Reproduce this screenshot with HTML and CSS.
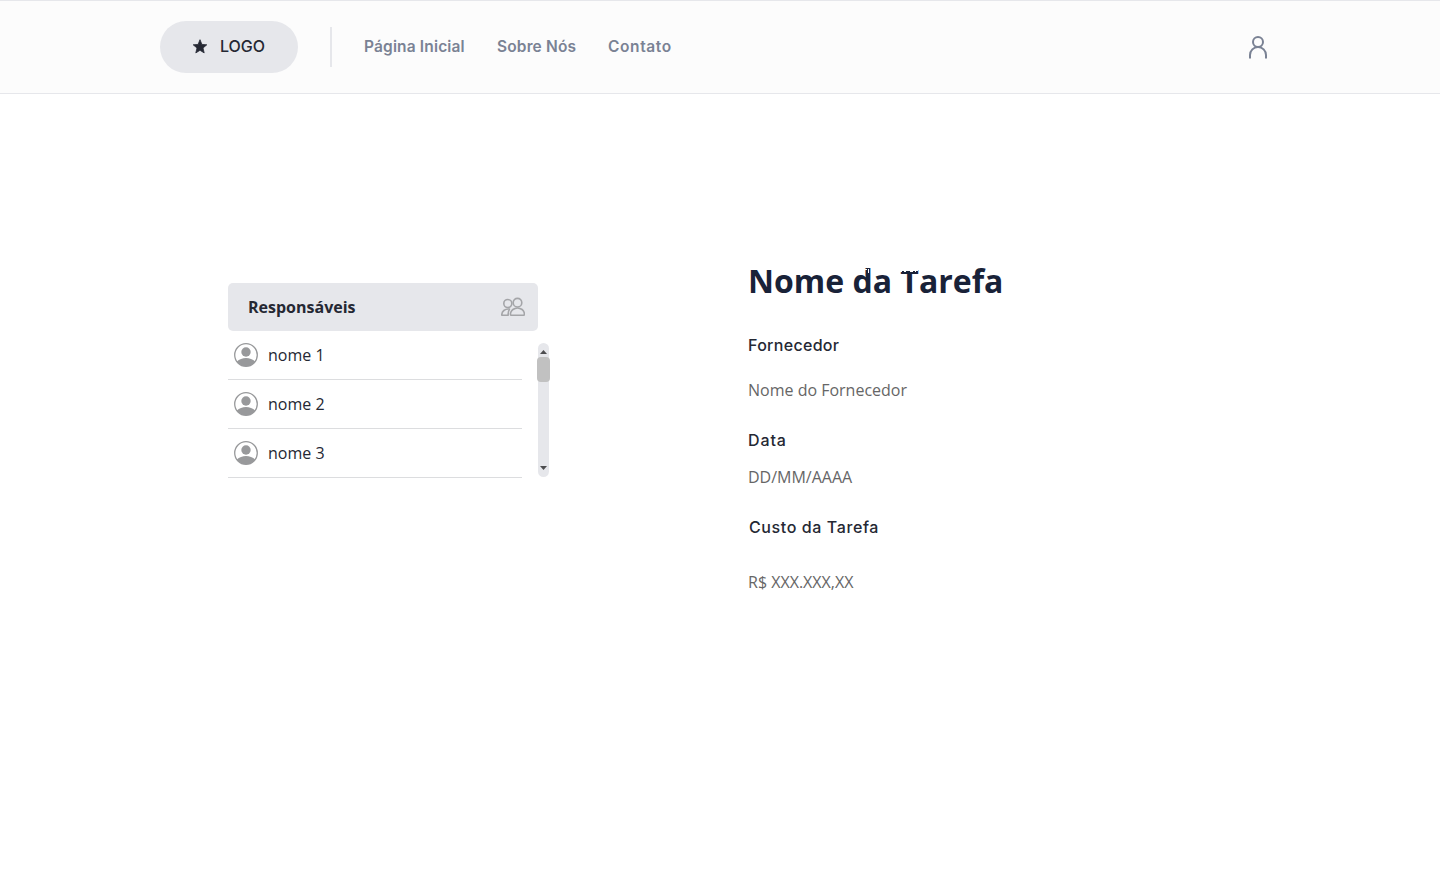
FILE: index.html
```html
<!DOCTYPE html>
<html lang="pt-BR">
<head>
<meta charset="utf-8">
<title>Nome da Tarefa</title>
<link rel="stylesheet" href="styles.css">
</head>
<body>
<header class="topbar">
  <a class="logo">
    <svg width="16" height="16" viewBox="0 0 16 16"><path fill="#252833" stroke="#252833" stroke-width=".8" stroke-linejoin="round" d="M8 1.700l1.900 4.700 4.900.4-3.800 3.200 1.200 4.900L8 12.300l-4.200 2.600L5 10 1.200 6.800l4.900-.4z"/></svg>
    <span>LOGO</span>
  </a>
  <span class="divider"></span>
  <nav class="nav">
    <a class="link-home">Página Inicial</a>
    <a class="link-about">Sobre Nós</a>
    <a class="link-contact">Contato</a>
  </nav>
  <svg class="user" width="24" height="26" viewBox="0 0 24 26" fill="none" stroke="#7a8294" stroke-width="2"><circle cx="12" cy="8" r="5"/><path d="M4 24.500v-3.500a8 8 0 0 1 16 0v3.500"/></svg>
</header>
<main class="content">
  <section class="people">
    <div class="people-head">
      <h2>Responsáveis</h2>
      <svg width="24" height="20" viewBox="0 0 24 20" fill="none" stroke="#a4a5a8" stroke-width="1.600" stroke-linejoin="round"><circle cx="6.800" cy="6.500" r="4"/><circle cx="16.500" cy="5.700" r="4.300"/><path d="M9.700 18.200c-.7-1.500.3-4.300 2.200-5.700 2.600-1.900 6.600-1.900 9.200 0 1.900 1.400 2.700 4.200 2 5.700z"/><path d="M8.500 12.100C4 11.600.5 14.300.8 18.200h6.400c-.2-2.300.2-4.300 1.300-6.100z"/></svg>
    </div>
    <div class="people-body">
      <ul class="list">
        <li><svg class="avatar" viewBox="0 0 24 24"><circle cx="12" cy="12" r="11.300" fill="none" stroke="#98999b" stroke-width="1.300"/><circle cx="12" cy="9" r="4.700" fill="#98999b"/><path fill="#98999b" d="M2.800 18.500C7.500 13.700 16.500 13.700 21.200 18.500A11.500 11.500 0 0 1 2.800 18.500z"/></svg><span>nome 1</span></li>
        <li><svg class="avatar" viewBox="0 0 24 24"><circle cx="12" cy="12" r="11.300" fill="none" stroke="#98999b" stroke-width="1.300"/><circle cx="12" cy="9" r="4.700" fill="#98999b"/><path fill="#98999b" d="M2.800 18.500C7.500 13.700 16.500 13.700 21.200 18.500A11.500 11.500 0 0 1 2.800 18.500z"/></svg><span>nome 2</span></li>
        <li><svg class="avatar" viewBox="0 0 24 24"><circle cx="12" cy="12" r="11.300" fill="none" stroke="#98999b" stroke-width="1.300"/><circle cx="12" cy="9" r="4.700" fill="#98999b"/><path fill="#98999b" d="M2.800 18.500C7.500 13.700 16.500 13.700 21.200 18.500A11.500 11.500 0 0 1 2.800 18.500z"/></svg><span>nome 3</span></li>
      </ul>
      <div class="scrollbar">
        <svg width="7" height="4" viewBox="0 0 7 4"><path fill="#4d4d4f" d="M0 4L3.500 0 7 4z"/></svg>
        <span class="thumb"></span>
        <svg class="down" width="7" height="4" viewBox="0 0 7 4"><path fill="#4d4d4f" d="M0 0h7L3.500 4z"/></svg>
      </div>
    </div>
  </section>
  <section class="details">
    <h1>Nome da Tarefa<svg class="nicks" width="254" height="8" viewBox="0 0 254 8" fill="#fff"><path d="M120 0h1v4h-1zM117 0h2v1h-2zM152 0h18v2h-18zM152 2h2v1h-2zM156 2h2v1h-2zM162 2h3v1h-3zM167 2h1v1h-1z"/></svg></h1>
    <h3 class="label-supplier">Fornecedor</h3>
    <p class="supplier">Nome do Fornecedor</p>
    <h3 class="label-date">Data</h3>
    <p class="date">DD/MM/AAAA</p>
    <h3 class="label-cost">Custo da Tarefa</h3>
    <p class="cost">R$ XXX.XXX,XX</p>
  </section>
</main>
</body>
</html>
```
FILE: styles.css
```css
* { box-sizing: border-box; }
body { margin: 0; background: #fff; color: #252833; font: 16px/24px "Open Sans", sans-serif; }
h1, h2, h3, p, ul { margin: 0; padding: 0; }
svg { display: block; flex: none; }
.topbar { display: flex; align-items: center; height: 94px; padding: 0 170px 0 160px; background: #fcfcfc; border-top: 1px solid #e6e7eb; border-bottom: 1px solid #e6e7eb; font-family: Inter, sans-serif; }
.logo { display: flex; align-items: center; width: 138px; height: 52px; padding: 0 0 2px 32px; gap: 12px; border-radius: 26px; background: #e6e7eb; font-size: 16px; font-weight: 500; letter-spacing: 0; }
.divider { width: 2px; height: 40px; margin: 0 32px; background: #e6e7eb; }
.nav { display: flex; gap: 32px; font-size: 15.500px; font-weight: 600; letter-spacing: .15px; color: #7a8294; white-space: nowrap; }
.link-home { width: 101px; }
.link-about { width: 79px; }
.link-contact { letter-spacing: .6px; }
.user { margin-left: auto; }
.content { display: flex; gap: 198px; padding-left: 228px; }
.people { width: 322px; padding-top: 189px; }
.people-head { display: flex; align-items: center; justify-content: space-between; width: 310px; height: 48px; padding: 0 13px 0 20px; border-radius: 5px; background: #e6e7eb; }
.people-head h2 { font-size: 16px; line-height: 24px; font-weight: 700; }
.people-body { display: flex; align-items: flex-start; gap: 15px; }
.list { width: 294px; list-style: none; }
.list li { display: flex; align-items: center; gap: 10px; height: 49px; padding-left: 6px; border-bottom: 1px solid #dcdddf; }
.avatar { width: 24px; height: 24px; }
.scrollbar { display: flex; flex-direction: column; align-items: center; width: 11px; height: 134px; margin: 12px 0 0 1px; padding: 7px 0; border-radius: 6px; background: #e6e7eb; }
.thumb { flex: none; width: 13px; height: 25px; margin-top: 3px; border-radius: 4px; background: #c1c1c1; }
.down { margin-top: auto; }
.details { padding-top: 163px; white-space: nowrap; }
h1 { position: relative; font-size: 32px; line-height: 48px; font-weight: 700; color: #192238; }
.nicks { position: absolute; left: 0; top: 12px; }
h3 { font: 500 16px/24px Inter, sans-serif; }
p { color: #666; }
.label-supplier { margin-top: 28px; letter-spacing: .3px; }
.supplier { margin-top: 21px; }
.label-date { margin-top: 26px; letter-spacing: .9px; }
.date { margin-top: 13px; }
.label-cost { margin: 26px 0 0 1px; letter-spacing: .6px; }
.cost { margin-top: 31px; }
```
